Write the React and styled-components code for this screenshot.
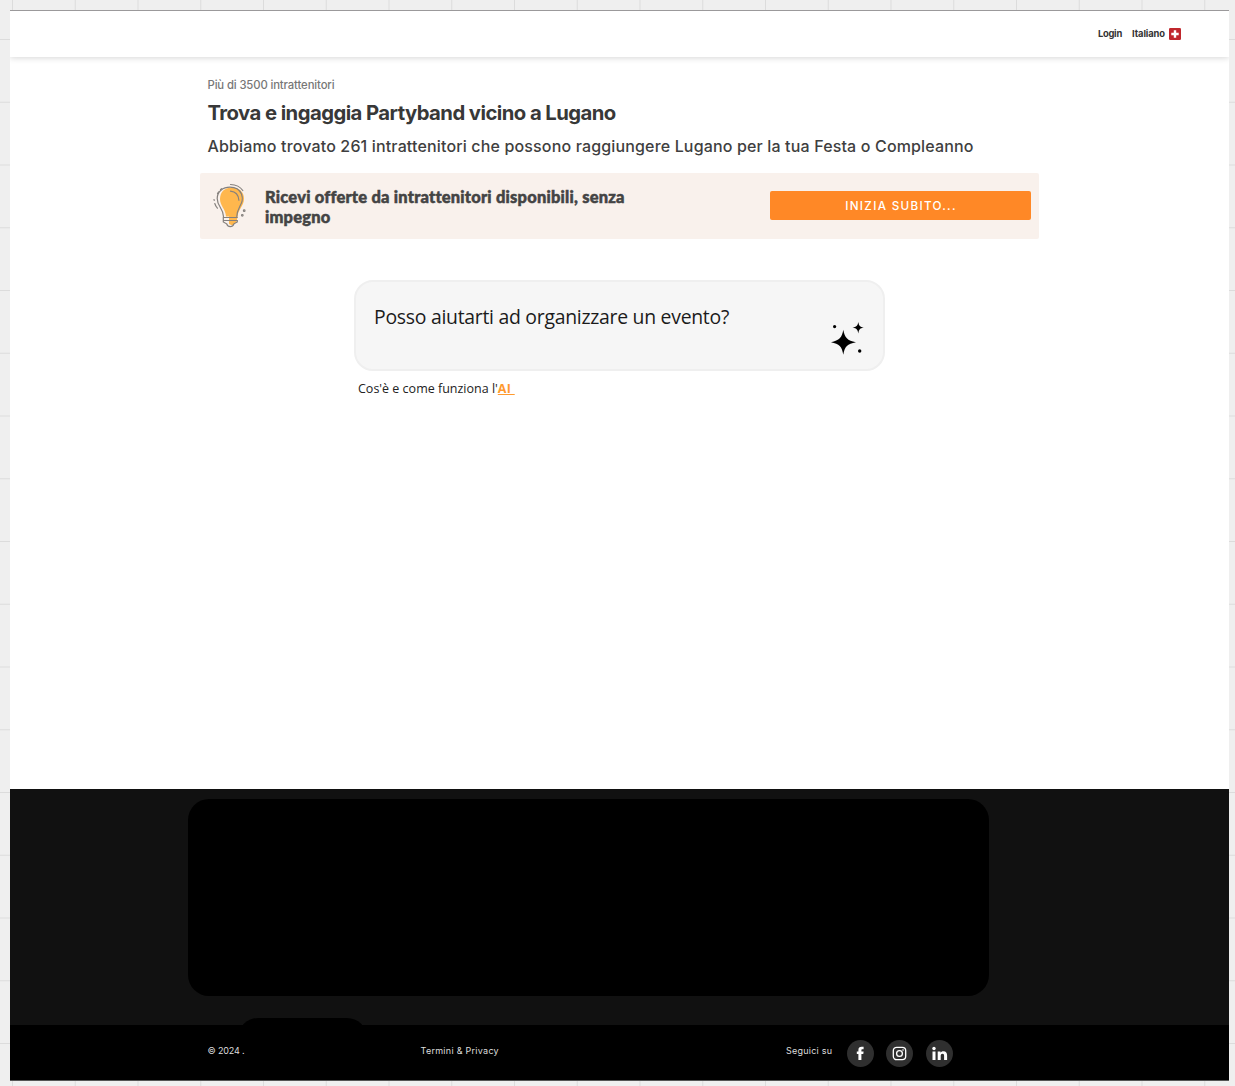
import React from "react";
import styled, { createGlobalStyle } from "styled-components";

const Global = createGlobalStyle`
  * { box-sizing: border-box; }
  html, body { margin: 0; padding: 0; }
  body { font-family: Inter, "Liberation Sans", sans-serif; background: #efefef; }
`;

const Canvas = styled.div`
  width: 1235px;
  height: 1086px;
  padding: 10px 6px 5px 10px;
  overflow: hidden;
  background-color: #efefef;
  background-image:
    linear-gradient(to right, #dcdcdc 1px, transparent 1px),
    linear-gradient(to bottom, #dcdcdc 1px, transparent 1px);
  background-size: 62.75px 100%, 100% 62.75px;
  background-position: 12px 0, 0 39px;
`;

const Page = styled.div`
  width: 1219px;
  height: 1071px;
  display: flex;
  flex-direction: column;
  overflow: hidden;
  background: #fff;
  border-top: 1px solid #9b999b;
`;

const Header = styled.header`
  height: 46px;
  flex: none;
  display: flex;
  align-items: center;
  justify-content: flex-end;
  gap: 10px;
  padding-right: 48px;
  background: #fff;
  box-shadow: 0 1px 6px rgba(0, 0, 0, 0.16);
`;

const NavLink = styled.a`
  display: flex;
  align-items: center;
  gap: 4px;
  font-size: 9.4px;
  line-height: 12px;
  font-weight: 700;
  letter-spacing: ${(p) => p.$track || 0}px;
  color: #333;
`;

const Main = styled.main`
  height: 732px;
  flex: none;
  display: flex;
  flex-direction: column;
  padding: 21px 190px 0;
`;

const Intro = styled.div`
  padding-left: 7.5px;
  display: flex;
  flex-direction: column;
  white-space: nowrap;
`;

const Eyebrow = styled.p`
  margin: 0;
  font-size: 11.3px;
  line-height: 14px;
  font-weight: 500;
  letter-spacing: -0.12px;
  color: #777;
`;

const Title = styled.h1`
  margin: 9px 0 0;
  font-size: 20.3px;
  line-height: 24px;
  font-weight: 700;
  letter-spacing: -0.56px;
  color: #383838;
`;

const Subtitle = styled.h2`
  margin: 11px 0 0;
  font-size: 16px;
  line-height: 20px;
  font-weight: 500;
  letter-spacing: 0.15px;
  color: #3f3f3f;
`;

const Banner = styled.section`
  margin-top: 17px;
  width: 839px;
  height: 66px;
  display: flex;
  align-items: center;
  padding: 0 8px 0 12px;
  background: #f9f1ec;
  border-radius: 2px;
`;

const BannerText = styled.p`
  margin: 1px 0 0 16px;
  width: 400px;
  font-family: "Lato Black", Lato, sans-serif;
  font-size: 16.5px;
  line-height: 20px;
  font-weight: 900;
  letter-spacing: 0.2px;
  -webkit-text-stroke: 0.5px #444;
  color: #444;
`;

const StartButton = styled.button`
  margin: 0 0 1px auto;
  width: 261px;
  height: 29px;
  padding: 0 0 0 1px;
  border: 0;
  border-radius: 2px;
  background: #ff8826;
  color: #fff;
  font-family: Inter, sans-serif;
  font-size: 11.7px;
  font-weight: 500;
  letter-spacing: 1.3px;
`;

const Assistant = styled.section`
  margin: 41px 0 0 154px;
  width: 531px;
`;

const Prompt = styled.div`
  height: 91px;
  display: flex;
  justify-content: space-between;
  padding: 22px 19px 0 18px;
  border: 2px solid #efefef;
  border-radius: 19px;
  background: #f6f6f6;
  font-family: "Open Sans", sans-serif;
  font-size: 19.4px;
  line-height: 26px;
  letter-spacing: -0.27px;
  color: #1b1b1b;
`;

const Hint = styled.p`
  margin: 9px 0 0 4px;
  font-family: "Open Sans", sans-serif;
  font-size: 12.5px;
  line-height: 18px;
  color: #222;
`;

const HintLink = styled.a`
  font-weight: 700;
  letter-spacing: 0.3px;
  color: #ff9a2e;
  text-decoration: underline;
  white-space: pre;
`;

const Footer = styled.footer`
  height: 236px;
  flex: none;
  display: flex;
  flex-direction: column;
  gap: 22px;
  padding: 10px 0 0 178px;
  overflow: hidden;
  background: #111;
`;

const FooterPanel = styled.div`
  flex: none;
  width: 801px;
  height: 197px;
  border-radius: 21px;
  background: #000;
`;

const FooterTab = styled.div`
  flex: none;
  width: 129px;
  height: 40px;
  margin-left: 50px;
  border-radius: 20px;
  background: #000;
`;

const Legal = styled.div`
  flex: 1;
  display: flex;
  align-items: flex-start;
  padding: 14px 0 0 197.5px;
  background: #000;
  border-bottom: 1px solid #555;
  font-size: 9px;
  line-height: 24px;
  color: #ddd;
  white-space: nowrap;
`;

const LegalItem = styled.span`
  width: ${(p) => p.$w}px;
  letter-spacing: ${(p) => p.$track || 0}px;
`;

const Socials = styled.div`
  display: flex;
  gap: 12.4px;
  padding-top: 0.6px;
`;

const Social = styled.a`
  width: 27px;
  height: 27px;
  display: flex;
  border-radius: 50%;
  background: #2f2f2f;
`;

function SwissFlag() {
  return (
    <svg width="12" height="12" viewBox="0 0 12 12">
      <rect width="12" height="12" rx="1.3" fill="#c0272d" />
      <path d="M4.8 2.3h2.4v2.5h2.5v2.4H7.2v2.5H4.8V7.2H2.3V4.8h2.5z" fill="#fff" />
    </svg>
  );
}

function Bulb() {
  return (
    <svg width="37" height="46" viewBox="0 0 37 46" fill="none" stroke="#85807d" strokeWidth="1.2" strokeLinecap="round">
      <path d="M20 4.500C12 4.500 8 9.500 8 16c0 7 5.500 9.500 6 17.500h3V41l3.500 1.500 4-3.500 1.200-6c.5-7 6.300-9.700 6.300-17.500C32 9 27 4.500 20 4.500z" fill="#ffb74d" stroke="none" />
      <path d="M11.500 33.500c0-8-6.300-10-6.300-18C5.200 8.500 11 4.200 18 4.200c5.500 0 9.500 2.500 11.500 6.800 3.500 9.500-4.500 12.500-4.700 22.500" />
      <path d="M18.500 8.200c4.700.5 8 4 8.400 9M18.500 1.500c5 .2 9.500 2 12.300 6M5.500 10.500l1-1.500M8.500 6.500l1.200-.8M2 16.500l.2.800M2.800 20.500c.5 1.800 1.300 3.200 2.600 4.700" />
      <path d="M11.300 34.500h14M11.300 37.500h14v1.500l-3.300 1.800c-.7 1.900-2 2.900-3.700 2.900s-3-1-3.700-2.900L11.300 39v-5" />
      <circle cx="32.200" cy="27.700" r=".8" /><circle cx="30.300" cy="32.300" r=".8" />
    </svg>
  );
}

const SparkleIcon = styled.svg`
  margin-top: 18px;
  flex: none;
`;

function Sparkles() {
  return (
    <SparkleIcon width="33" height="34" viewBox="0 0 33 34" fill="#000">
      <path d="M12.300 7.800c1.400 8 4 10.800 12.700 12.400-8.700 1.600-11.300 4.200-12.700 12.600C10.900 24.400 8.300 21.800-.3 20.200 8.300 18.600 10.900 15.800 12.300 7.800z" />
      <path d="M27.300 0c.7 3.800 1.600 4.900 5.500 5.600-3.900.7-4.800 1.800-5.500 5.800-.7-4-1.800-5.100-5.800-5.800 4-.7 5.100-1.800 5.800-5.600z" />
      <circle cx="3.600" cy="4.600" r="1.600" /><circle cx="28.700" cy="29" r="1.700" />
    </SparkleIcon>
  );
}

function FacebookIcon() {
  return (
    <svg width="27" height="27" viewBox="0 0 27 27" fill="#fff">
      <path d="M11.400 20v-6H9.800v-2.600h1.600V10c0-2 1.100-3.200 3.200-3.200h2v2.500h-1.200c-.8 0-1 .4-1 1.100v1h2.200l-.3 2.600h-1.900v6z" />
    </svg>
  );
}

function InstagramIcon() {
  return (
    <svg width="27" height="27" viewBox="0 0 27 27" fill="none" stroke="#fff" strokeWidth="1.300">
      <rect x="7.300" y="7.300" width="12.400" height="12.400" rx="3.400" />
      <circle cx="13.500" cy="13.500" r="2.900" />
      <circle cx="17" cy="10" r=".8" fill="#fff" stroke="none" />
    </svg>
  );
}

function LinkedinIcon() {
  return (
    <svg width="27" height="27" viewBox="0 0 27 27" fill="#fff">
      <circle cx="8" cy="8.500" r="1.700" />
      <path d="M6.500 11.500h3V20h-3zM11.700 11.500h2.800v1.200c.6-1 1.500-1.500 2.900-1.500 2.700 0 3.700 1.600 3.700 4.300V20h-3v-4.200c0-1.300-.4-2.100-1.500-2.100-1.300 0-1.900.9-1.900 2.200V20h-3z" />
    </svg>
  );
}

export default function App() {
  return (
    <>
      <Global />
      <Canvas>
        <Page>
          <Header>
            <NavLink $track={-0.25}>Login</NavLink>
            <NavLink $track={-0.1}>Italiano<SwissFlag /></NavLink>
          </Header>
          <Main>
            <Intro>
              <Eyebrow>Più di 3500 intrattenitori</Eyebrow>
              <Title>Trova e ingaggia Partyband vicino a Lugano</Title>
              <Subtitle>Abbiamo trovato 261 intrattenitori che possono raggiungere Lugano per la tua Festa o Compleanno</Subtitle>
            </Intro>
            <Banner>
              <Bulb />
              <BannerText>Ricevi offerte da intrattenitori disponibili, senza impegno</BannerText>
              <StartButton>INIZIA SUBITO...</StartButton>
            </Banner>
            <Assistant>
              <Prompt>Posso aiutarti ad organizzare un evento?<Sparkles /></Prompt>
              <Hint>Cos'è e come funziona l'<HintLink>AI </HintLink></Hint>
            </Assistant>
          </Main>
          <Footer>
            <FooterPanel />
            <FooterTab />
          </Footer>
          <Legal>
            <LegalItem $w={213} $track={-0.15}>© 2024 .</LegalItem>
            <LegalItem $w={365.5} $track={0.27}>Termini &amp; Privacy</LegalItem>
            <LegalItem $w={60.8} $track={0.22}>Seguici su</LegalItem>
            <Socials>
              <Social><FacebookIcon /></Social>
              <Social><InstagramIcon /></Social>
              <Social><LinkedinIcon /></Social>
            </Socials>
          </Legal>
        </Page>
      </Canvas>
    </>
  );
}
